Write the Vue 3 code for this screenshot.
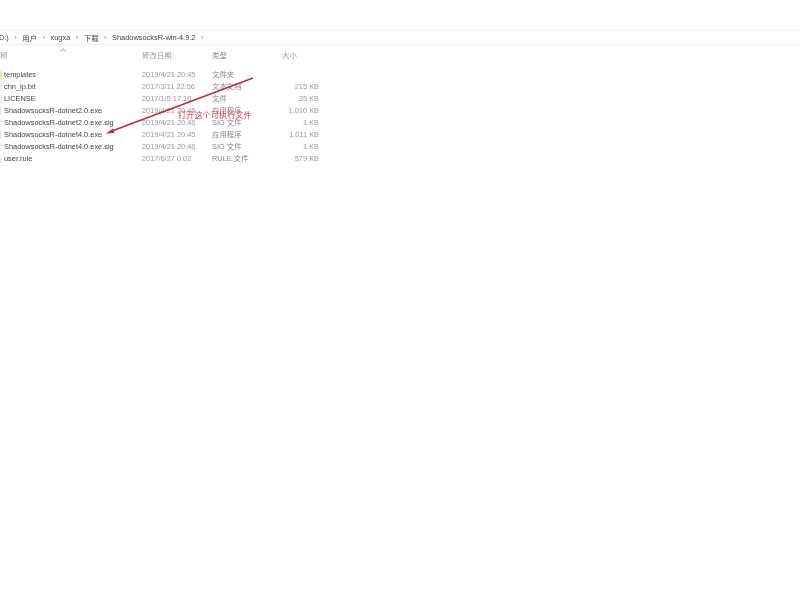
<template>
  <div class="explorer">
    <div class="address-bar">
      <template v-for="part in crumbs" :key="part">
        <span class="crumb">{{ part }}</span>
        <span class="sep">›</span>
      </template>
    </div>
    <div class="head-row">
      <span class="col-name">称</span>
      <svg class="sort" width="8" height="4" viewBox="0 0 8 4">
        <path d="M1 3.5 L4 0.8 L7 3.5" fill="none" stroke="#888" stroke-width="0.8" />
      </svg>
      <span class="col-date">修改日期</span>
      <span class="col-type">类型</span>
      <span class="col-size-head">大小</span>
    </div>
    <div class="file-list">
      <div class="file-row" v-for="f in files" :key="f.name">
        <span class="icon" :class="{ folder: f.folder }"></span>
        <span class="col-name">{{ f.name }}</span>
        <span class="col-date">{{ f.date }}</span>
        <span class="col-type">{{ f.type }}</span>
        <span class="col-size">{{ f.size }}</span>
      </div>
    </div>

    <svg class="arrow" width="800" height="600" viewBox="0 0 800 600">
      <line x1="253" y1="78" x2="112" y2="131" stroke="#c02c3c" stroke-width="1.6" />
      <polygon points="106,133.5 113,128.5 114.5,133" fill="#c02c3c" />
    </svg>
    <span class="note">打开这个可执行文件</span>
  </div>
</template>

<script setup>
const crumbs = ['(D:)', '用户', 'xugxa', '下载', 'ShadowsocksR-win-4.9.2']

const files = [
  { name: 'templates', date: '2019/4/21 20:45', type: '文件夹', size: '', folder: true },
  { name: 'chn_ip.txt', date: '2017/3/11 22:56', type: '文本文档', size: '215 KB' },
  { name: 'LICENSE', date: '2017/1/5 17:10', type: '文件', size: '35 KB' },
  { name: 'ShadowsocksR-dotnet2.0.exe', date: '2019/4/21 20:45', type: '应用程序', size: '1,010 KB' },
  { name: 'ShadowsocksR-dotnet2.0.exe.sig', date: '2019/4/21 20:46', type: 'SIG 文件', size: '1 KB' },
  { name: 'ShadowsocksR-dotnet4.0.exe', date: '2019/4/21 20:45', type: '应用程序', size: '1,011 KB' },
  { name: 'ShadowsocksR-dotnet4.0.exe.sig', date: '2019/4/21 20:46', type: 'SIG 文件', size: '1 KB' },
  { name: 'user.rule', date: '2017/6/27 0:02', type: 'RULE 文件', size: '579 KB' },
]
</script>

<style>
body {
  background: #fff;
}
</style>

<style scoped>
.explorer {
  position: relative;
  width: 800px;
  height: 600px;
  overflow: hidden;
  padding-top: 28px;
  box-sizing: border-box;
  background: #fff;
  font-family: "Liberation Sans", "Noto Sans CJK SC", sans-serif;
  font-size: 7.4px;
  color: #555;
  filter: blur(0.35px);
}

.address-bar {
  height: 13px;
  margin-top: 2px;
  display: flex;
  align-items: center;
  border-top: 1px solid #efefef;
  border-bottom: 1px solid #efefef;
  color: #444;
}

.crumb:first-child {
  margin-left: -3.5px;
}

.sep {
  margin: 0 5.5px;
  color: #888;
}

.head-row {
  position: relative;
  height: 24px;
  box-sizing: border-box;
  padding-top: 5px;
  display: flex;
  align-items: flex-start;
  line-height: 12px;
  color: #999;
}

.head-row .col-name {
  width: 142px;
  flex: none;
}

.sort {
  position: absolute;
  left: 59px;
  top: 3px;
}

.file-list {
  display: flex;
  flex-direction: column;
}

.file-row {
  height: 12px;
  display: flex;
  align-items: center;
  line-height: 12px;
}

.icon {
  width: 2px;
  height: 8px;
  margin-right: 2px;
  flex: none;
  background: #eeeeee;
}

.icon.folder {
  background: #f7e09a;
}

.file-row .col-name {
  width: 138px;
  flex: none;
  color: #444;
}

.col-date {
  width: 70px;
  flex: none;
  color: #999;
}

.col-type {
  width: 70px;
  flex: none;
  color: #888;
}

.col-size {
  width: 37px;
  flex: none;
  text-align: right;
  color: #999;
}

.arrow {
  position: absolute;
  left: 0;
  top: 0;
  pointer-events: none;
}

.note {
  position: absolute;
  left: 178px;
  top: 110px;
  font-size: 8.2px;
  line-height: 12px;
  color: #d8404a;
  white-space: nowrap;
}
</style>
